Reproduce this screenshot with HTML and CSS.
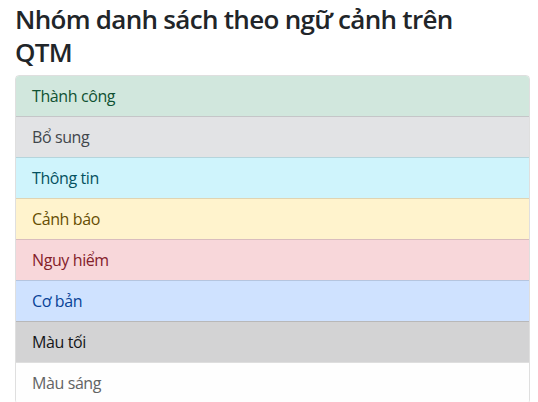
FILE: index.html
```html
<!DOCTYPE html>
<html lang="vi">
<head>
<meta charset="utf-8">
<link rel="stylesheet" href="styles.css">
</head>
<body>
<div class="container">
  <h2 class="title">Nhóm danh sách theo ngữ cảnh trên QTM</h2>
  <ul class="list-group">
    <li class="item success">Thành công</li>
    <li class="item secondary">Bổ sung</li>
    <li class="item info">Thông tin</li>
    <li class="item warning">Cảnh báo</li>
    <li class="item danger">Nguy hiểm</li>
    <li class="item primary">Cơ bản</li>
    <li class="item dark">Màu tối</li>
    <li class="item light">Màu sáng</li>
  </ul>
</div>
</body>
</html>
```
FILE: styles.css
```css
* { box-sizing: border-box; }
html, body { margin: 0; padding: 0; background: #fff; }
body {
  font-family: "Open Sans", "Noto Sans", sans-serif;
  font-size: 16px;
  line-height: 1.5;
  color: #212529;
}
.container {
  padding: 3px 8px 0 15px;
}
.title {
  margin: 0 0 6px;
  font-size: 26px;
  font-weight: 600;
  line-height: 33px;
  letter-spacing: -0.7px;
  max-width: 470px;
}
.list-group {
  list-style: none;
  margin: 0;
  padding: 0;
  border: 1px solid rgba(0,0,0,.125);
  border-radius: 4px;
  overflow: hidden;
}
.item {
  padding: 8px 16px 8px 16px;
  border-top: 1px solid rgba(0,0,0,.125);
  height: 41px;
  letter-spacing: -0.4px;
}
.item:first-child { border-top: 0; height: 40px; }
.success { background: #d1e7dd; color: #0f5132; }
.secondary { background: #e2e3e5; color: #41464b; }
.info { background: #cff4fc; color: #055160; }
.warning { background: #fff3cd; color: #664d03; }
.danger { background: #f8d7da; color: #842029; }
.primary { background: #cfe2ff; color: #084298; }
.dark { background: #d3d3d4; color: #141619; }
.light { background: #fefefe; color: #636464; }
```
